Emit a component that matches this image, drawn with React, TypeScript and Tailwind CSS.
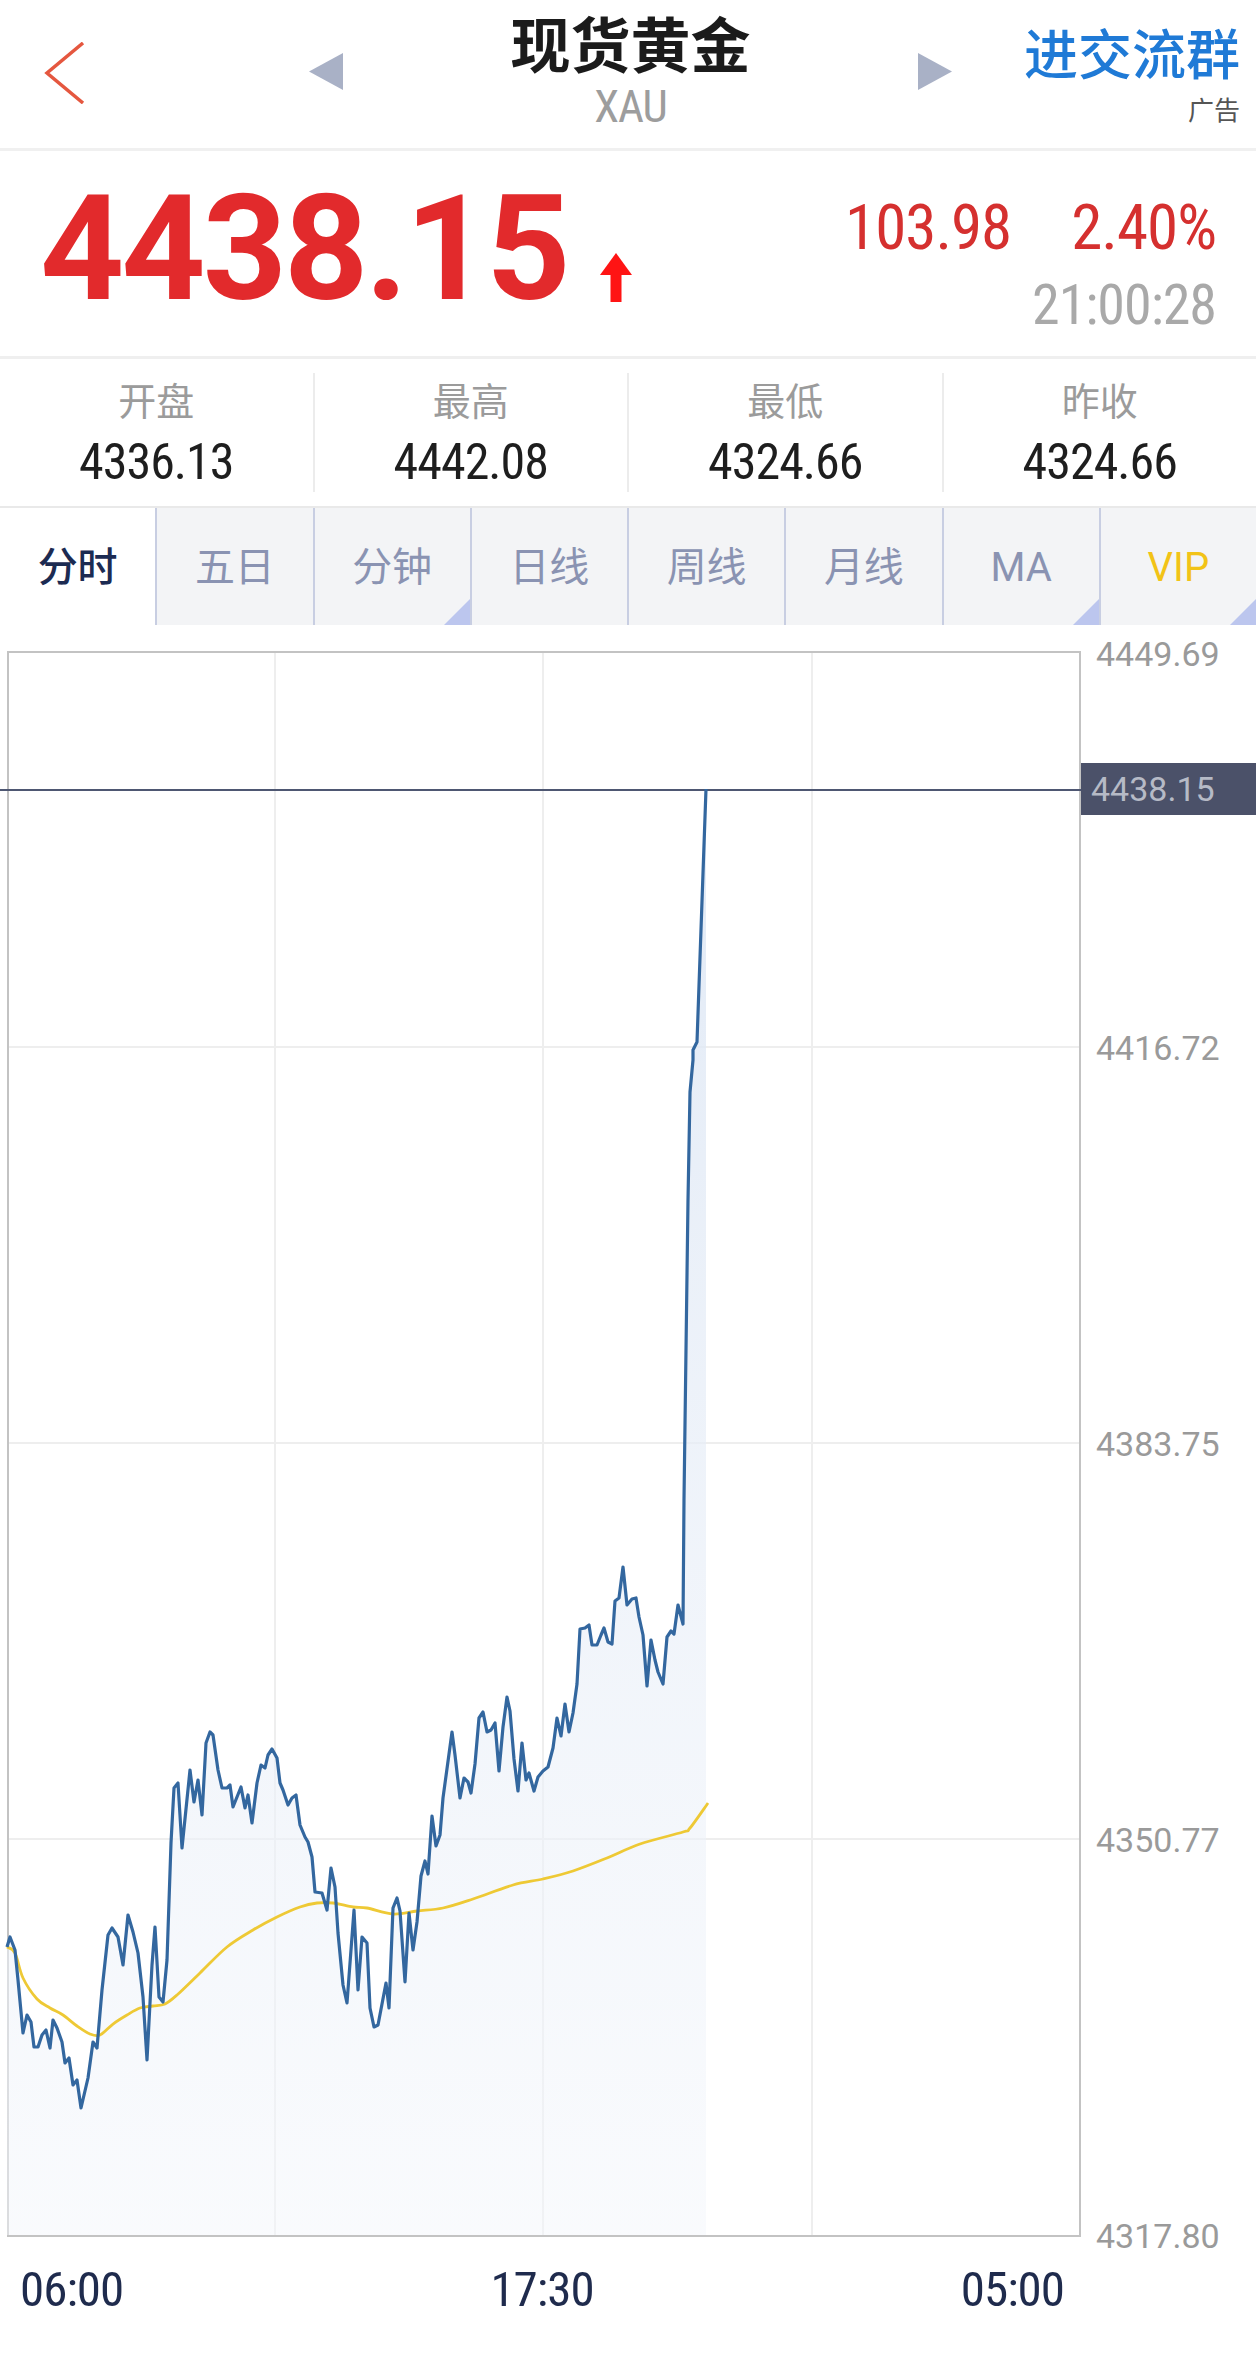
import React from "react";

const blue: number[][] = [
  [7, 1947], [10, 1937], [15, 1950], [18, 1980], [23, 2033], [27, 2015], [31, 2022], [34, 2047], [38, 2047],
  [42, 2035], [46, 2030], [50, 2048], [53, 2020], [57, 2028], [62, 2042], [65, 2063], [69, 2058], [73, 2085],
  [77, 2080], [81, 2108], [88, 2078], [93, 2042], [97, 2048], [102, 1990], [108, 1935], [112, 1928], [118, 1937],
  [123, 1965], [128, 1915], [133, 1932], [138, 1953], [143, 1997], [147, 2060], [152, 1965], [155, 1927],
  [159, 1997], [163, 2002], [167, 1960], [171, 1843], [174, 1788], [178, 1783], [182, 1848], [190, 1770],
  [194, 1802], [198, 1780], [202, 1815], [206, 1743], [210, 1732], [213, 1735], [218, 1770], [222, 1788],
  [227, 1788], [230, 1785], [233, 1807], [241, 1787], [245, 1808], [248, 1795], [252, 1823], [257, 1783],
  [261, 1765], [265, 1768], [268, 1755], [272, 1749], [277, 1758], [280, 1783], [283, 1790], [288, 1805],
  [292, 1798], [296, 1795], [300, 1825], [305, 1837], [308, 1842], [312, 1857], [315, 1892], [322, 1893],
  [327, 1910], [331, 1868], [335, 1887], [338, 1933], [343, 1985], [347, 2003], [354, 1910], [358, 1990],
  [362, 1937], [367, 1943], [370, 2008], [374, 2027], [378, 2025], [386, 1983], [389, 2008], [393, 1908],
  [397, 1898], [400, 1911], [405, 1982], [409, 1913], [413, 1950], [417, 1922], [421, 1876], [425, 1861],
  [428, 1874], [432, 1816], [436, 1846], [440, 1835], [443, 1798], [452, 1732], [455, 1755], [460, 1798],
  [464, 1778], [468, 1782], [471, 1793], [475, 1764], [479, 1718], [483, 1712], [487, 1732], [491, 1730],
  [495, 1723], [499, 1771], [503, 1727], [507, 1697], [510, 1711], [514, 1759], [518, 1791], [522, 1743],
  [526, 1780], [529, 1773], [534, 1791], [538, 1777], [543, 1771], [548, 1767], [553, 1748], [557, 1718],
  [561, 1736], [565, 1704], [569, 1732], [573, 1713], [577, 1684], [580, 1629], [585, 1628], [589, 1625],
  [592, 1645], [597, 1645], [601, 1635], [604, 1628], [608, 1642], [612, 1644], [615, 1601], [619, 1598],
  [623, 1567], [627, 1605], [632, 1599], [636, 1598], [639, 1617], [643, 1635], [647, 1686], [651, 1640],
  [655, 1660], [658, 1672], [663, 1684], [667, 1637], [671, 1631], [674, 1634], [678, 1605], [683, 1624],
  [684, 1500], [688, 1200], [690, 1092], [693, 1060], [693, 1050], [697, 1042], [706, 789],
];

const ma: number[][] = [
  [7, 1947], [15, 1953], [23, 1978], [37, 1999], [50, 2008], [63, 2015], [77, 2026], [90, 2034], [100, 2035],
  [113, 2024], [127, 2015], [140, 2008], [153, 2006], [165, 2004], [177, 1995], [200, 1973], [227, 1947],
  [253, 1930], [277, 1917], [300, 1907], [317, 1903], [333, 1903], [353, 1907], [367, 1908], [393, 1914],
  [417, 1911], [443, 1908], [473, 1899], [513, 1885], [543, 1879], [573, 1871], [607, 1858], [640, 1844],
  [683, 1832], [690, 1828], [708, 1803],
];

const line = (pts: number[][]) => pts.map((p, i) => `${i ? "L" : "M"}${p[0]} ${p[1]}`).join(" ");

const smooth = (pts: number[][]) => {
  let d = `M${pts[0][0]} ${pts[0][1]}`;
  for (let i = 0; i < pts.length - 1; i++) {
    const p0 = pts[i - 1] || pts[i];
    const p1 = pts[i];
    const p2 = pts[i + 1];
    const p3 = pts[i + 2] || p2;
    const c1x = p1[0] + (p2[0] - p0[0]) / 6;
    const c1y = p1[1] + (p2[1] - p0[1]) / 6;
    const c2x = p2[0] - (p3[0] - p1[0]) / 6;
    const c2y = p2[1] - (p3[1] - p1[1]) / 6;
    d += ` C${c1x} ${c1y} ${c2x} ${c2y} ${p2[0]} ${p2[1]}`;
  }
  return d;
};

const stats = [
  { label: "开盘", value: "4336.13" },
  { label: "最高", value: "4442.08" },
  { label: "最低", value: "4324.66" },
  { label: "昨收", value: "4324.66" },
];

const tabs = ["分时", "五日", "分钟", "日线", "周线", "月线", "MA", "VIP"];
const cornerTabs = ["分钟", "MA", "VIP"];

const axis = [
  { v: "4449.69", top: -14 },
  { v: "4416.72", top: 380 },
  { v: "4383.75", top: 776 },
  { v: "4350.77", top: 1172 },
  { v: "4317.80", top: 1568 },
];

const num = "font-['Roboto_Condensed','Roboto',sans-serif] tracking-[-1px]";

export default function App() {
  return (
    <div className="min-h-[2361px] w-[1256px] bg-white font-['Roboto','Noto_Sans_CJK_SC',sans-serif] text-[#222]">
      {/* header */}
      <div className="flex h-[151px] border-b-[3px] border-[#f0f0f0]">
        <div className="w-[300px] pl-[44px] pt-[42px]">
          <svg width="42" height="62" viewBox="0 0 42 62">
            <polyline points="39,1 3,31 39,61" fill="none" stroke="#e5573f" strokeWidth="3.5" />
          </svg>
        </div>
        <div className="flex w-[654px] items-start justify-between pl-[9px] pr-[2px]">
          <svg className="mt-[53px]" width="34" height="37" viewBox="0 0 34 37">
            <polygon points="34,0 34,37 0,18.5" fill="#a9b1c6" />
          </svg>
          <div className="flex flex-col items-center pt-[18px]">
            <div className="text-[60px] leading-none font-bold text-[#1b1b1b]">现货黄金</div>
            <div className={`${num} mt-[6px] text-[45px] leading-none text-[#9d9d9d]`}>XAU</div>
          </div>
          <svg className="mt-[53px]" width="34" height="37" viewBox="0 0 34 37">
            <polygon points="0,0 0,37 34,18.5" fill="#a9b1c6" />
          </svg>
        </div>
        <div className="flex flex-1 flex-col items-end pr-[16px] pt-[30px]">
          <div className="text-[54px] leading-none font-medium text-[#1f7ad6]">进交流群</div>
          <div className="mt-[14px] text-[26px] leading-none text-[#555]">广告</div>
        </div>
      </div>

      {/* price */}
      <div className="flex h-[208px] border-b-[3px] border-[#efefef]">
        <div className="flex items-start pl-[40px] pt-[25px]">
          <div className="text-[147px] leading-none font-bold tracking-[-3px] text-[#e22a2c]">4438.15</div>
          <svg className="ml-[32px] mt-[77px]" width="32" height="49" viewBox="0 0 32 49">
            <polygon points="0,22 16,0 32,22" fill="#ff1414" />
            <rect x="10.5" y="21" width="11" height="28" fill="#ff1414" />
          </svg>
        </div>
        <div className={`${num} ml-auto flex flex-col items-end pr-[40px] pt-[45px]`}>
          <div className="flex gap-[60px] text-[63px] leading-none text-[#d5302f]">
            <span>103.98</span>
            <span>2.40%</span>
          </div>
          <div className="mt-[18px] text-[56px] leading-none text-[#a9a9a9]">21:00:28</div>
        </div>
      </div>

      {/* stats */}
      <div className="flex h-[149px] border-b-2 border-[#e9e9e9] py-[14px]">
        {stats.map((s, i) => (
          <div
            key={s.label}
            className={`flex flex-1 flex-col items-center pt-[10px] ${i ? "border-l-2 border-[#ececec]" : ""}`}
          >
            <div className="text-[38px] leading-none text-[#9b9b9b]">{s.label}</div>
            <div className={`${num} mt-[16px] text-[50px] leading-none text-[#1e1e1e]`}>{s.value}</div>
          </div>
        ))}
      </div>

      {/* tabs */}
      <div className="flex h-[117px]">
        {tabs.map((t, i) => (
          <div
            key={t}
            className={`relative flex flex-1 items-center justify-center pt-[3px] text-[40px] leading-none ${
              i === 0 ? "bg-white font-medium text-[#1c2b52]" : "border-l-2 border-[#c8cee2] bg-[#f3f4f6]"
            } ${t === "VIP" ? "text-[#f2c317]" : i ? "text-[#8a93b2]" : ""}`}
          >
            {t}
            {cornerTabs.includes(t) && (
              <svg className="absolute right-0 bottom-0" width="26" height="26" viewBox="0 0 26 26">
                <polygon points="26,0 26,26 0,26" fill="#bcc6ee" />
              </svg>
            )}
          </div>
        ))}
      </div>

      {/* chart */}
      <div className="mt-[26px] flex pl-[7px]">
        <div className="relative h-[1586px] w-[1074px] border-2 border-[#c3c3c3]">
          <svg
            className="absolute -top-[2px] -left-[2px] overflow-visible"
            width="1074"
            height="1586"
            viewBox="7 651 1074 1586"
          >
            <defs>
              <linearGradient id="fill" x1="0" y1="0" x2="0" y2="1">
                <stop offset="0" stopColor="#dce6f4" stopOpacity="0.85" />
                <stop offset="1" stopColor="#f3f6fb" stopOpacity="0.5" />
              </linearGradient>
            </defs>
            {[275, 543, 812].map((x) => (
              <line key={x} x1={x} y1="653" x2={x} y2="2235" stroke="#eeeeee" strokeWidth="2" />
            ))}
            {[1047, 1443, 1839].map((y) => (
              <line key={y} x1="9" y1={y} x2="1079" y2={y} stroke="#eeeeee" strokeWidth="2" />
            ))}
            <path d={`${line(blue)} L706 2235 L7 2235 Z`} fill="url(#fill)" />
            <line x1="0" y1="790" x2="1081" y2="790" stroke="#4e5772" strokeWidth="2" />
            <path d={smooth(ma)} fill="none" stroke="#eec935" strokeWidth="2.8" />
            <path d={line(blue)} fill="none" stroke="#33679f" strokeWidth="3.2" strokeLinejoin="round" />
          </svg>
        </div>
        <div className="relative flex-1 text-[34px] leading-none text-[#9a9a9a]">
          {axis.map((a) => (
            <div key={a.v} className="absolute left-[15px]" style={{ top: a.top }}>
              {a.v}
            </div>
          ))}
          <div className="absolute top-[112px] right-0 left-0 flex h-[52px] items-center bg-[#4b5169] pl-[10px] text-[#b6bac6]">
            4438.15
          </div>
        </div>
      </div>

      {/* time axis */}
      <div
        className={`${num} mt-[28px] flex w-[1081px] justify-between pl-[20px] pr-[17px] text-[49px] leading-none text-[#1f2b4d]`}
      >
        <span>06:00</span>
        <span>17:30</span>
        <span>05:00</span>
      </div>
    </div>
  );
}
